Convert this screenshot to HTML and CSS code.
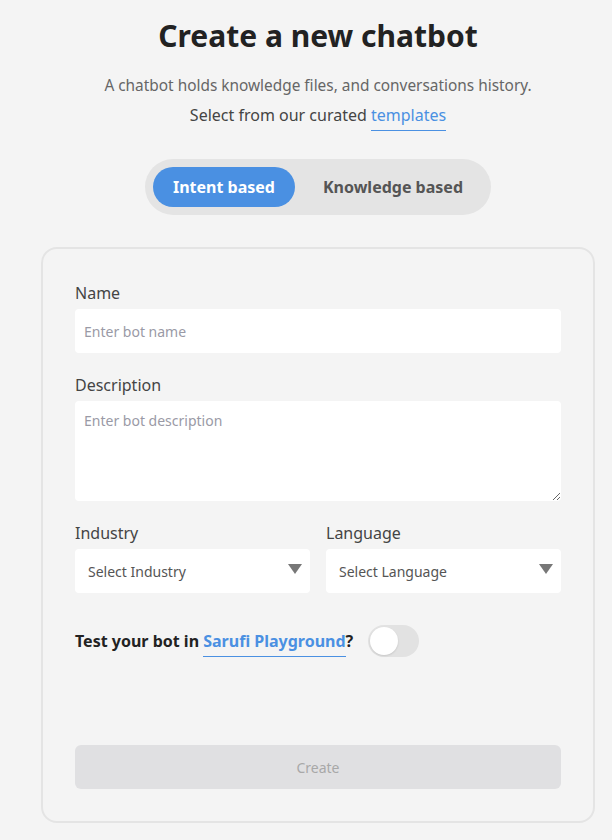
FILE: index.html
```html
<!DOCTYPE html>
<html>
<head>
<meta charset="utf-8">
<link rel="stylesheet" href="styles.css">
</head>
<body>
<main class="page">
  <h1 class="title">Create a new chatbot</h1>
  <p class="sub">A chatbot holds knowledge files, and conversations history.</p>
  <p class="sub sub2">Select from our curated <a class="link" href="#">templates</a></p>
  <div class="tabs">
    <button class="tab active">Intent based</button>
    <button class="tab">Knowledge based</button>
  </div>
  <form class="card">
    <label class="field">
      <span class="label">Name</span>
      <input class="input" type="text" placeholder="Enter bot name">
    </label>
    <label class="field spaced">
      <span class="label">Description</span>
      <textarea class="input textarea" placeholder="Enter bot description"></textarea>
    </label>
    <div class="row">
      <div class="field col">
        <span class="label">Industry</span>
        <div class="select"><span>Select Industry</span><i class="caret"></i></div>
      </div>
      <div class="field col">
        <span class="label">Language</span>
        <div class="select"><span>Select Language</span><i class="caret"></i></div>
      </div>
    </div>
    <div class="test">
      <span class="test-text">Test your bot in <a class="link strong" href="#">Sarufi Playground</a>?</span>
      <span class="switch"><span class="knob"></span></span>
    </div>
    <button class="create" type="button">Create</button>
  </form>
</main>
</body>
</html>
```
FILE: styles.css
```css
* { box-sizing: border-box; }
html, body { margin: 0; padding: 0; background: #f4f4f4; }
body { font-family: "Noto Sans", "Open Sans", sans-serif; color: #222; }
.page { width: 612px; display: flex; flex-direction: column; align-items: center; padding: 14px 0 0 24px; }
.title { font-size: 30px; font-weight: 700; margin: 0; line-height: 44px; color: #222; }
.sub { margin: 13px 0 0; font-size: 15.4px; line-height: 29px; color: #666; }
.sub2 { margin-top: 1px; font-size: 16px; color: #444; }
.link { color: #4a90e2; text-decoration: none; border-bottom: 1.5px solid #4a90e2; padding-bottom: 4px; }
.tabs { margin-top: 29px; background: #e4e4e4; border-radius: 28px; padding: 8px; display: flex; }
.tab { font-family: inherit; font-size: 16px; font-weight: 700; border: 0; background: transparent; color: #555; height: 40px; border-radius: 20px; padding: 0 20px 0 28px; white-space: nowrap; cursor: pointer; }
.tab.active { background: #4a90e2; color: #fff; width: 142px; padding: 0; }
.card { margin-top: 32px; width: 554px; border: 2px solid #e4e4e4; border-radius: 16px; padding: 32px; display: flex; flex-direction: column; height: 576px; }
.field { display: flex; flex-direction: column; }
.col { flex: 1; min-width: 0; }
.label { font-size: 16px; color: #444; line-height: 24px; margin-bottom: 4px; }
.spaced, .row { margin-top: 20px; }
.input { width: 100%; height: 44px; border: 0; border-radius: 4px; background: #fff; font-family: inherit; font-size: 14px; padding: 0 9px; color: #333; outline: none; }
.input::placeholder { color: #9a9aa6; }
.textarea { height: 100px; padding: 10px 9px; resize: vertical; line-height: 20px; display: block; }
.row { display: flex; gap: 16px; }
.select { height: 44px; background: #fff; border-radius: 4px; display: flex; align-items: center; justify-content: space-between; padding: 0 8px 0 13px; font-size: 14px; color: #555; }
.caret { width: 0; height: 0; border-left: 7px solid transparent; border-right: 7px solid transparent; border-top: 10px solid #777; margin-top: -4px; }
.test { display: flex; align-items: center; margin-top: 32px; gap: 15px; }
.test-text { font-size: 16px; font-weight: 700; color: #222; }
.strong { font-weight: 700; }
.switch { width: 51px; height: 32px; border-radius: 16px; background: #e2e2e2; position: relative; display: inline-block; }
.knob { position: absolute; left: 2px; top: 2px; width: 28px; height: 28px; border-radius: 50%; background: #fff; box-shadow: 0 1px 2px rgba(0,0,0,0.12); }
.create { margin-top: auto; height: 44px; width: 100%; border: 0; border-radius: 6px; background: #e0e0e2; color: #a8a8a8; font-family: inherit; font-size: 14px; }
```
